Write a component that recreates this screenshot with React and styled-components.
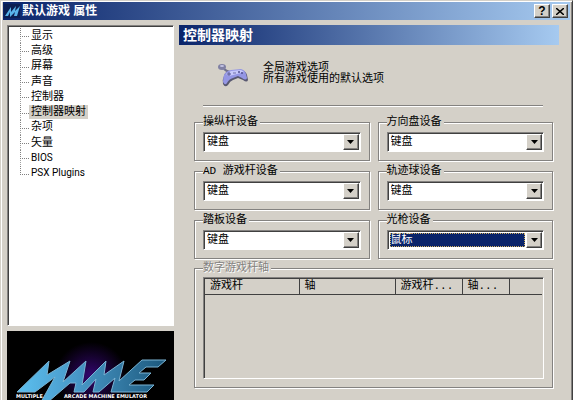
import React, { useState } from 'react'
import styled, { createGlobalStyle, css } from 'styled-components'

const face = '#d4d0c8'
const shadow = '#848280'
const dark = '#404040'
const navy = '#0a246a'
const sky = '#a6caf0'

const uiFont = '"Liberation Sans", "Noto Sans CJK SC", sans-serif'
const formFont = '"Liberation Mono", "Noto Sans CJK SC", monospace'
const treeFont = 'Roboto, "Noto Sans CJK SC", sans-serif'

const GlobalStyle = createGlobalStyle`
  * {
    box-sizing: border-box;
  }

  body {
    margin: 0;
    background: ${face};
    color: #000;
    font-family: ${uiFont};
    font-size: 11px;
    overflow: hidden;
  }
`

const sunken = css`
  border: 1px solid;
  border-color: ${shadow} #fff #fff ${shadow};
  box-shadow: inset 1px 1px ${dark};
`

const raised = css`
  border: 1px solid;
  border-color: #fff ${dark} ${dark} #fff;
  box-shadow: inset -1px -1px ${shadow};
`

const Window = styled.div`
  display: flex;
  flex-direction: column;
  height: 100vh;
  padding: 1px 1px 0 1px;
  background: ${face};
  border-top: 1px solid ${face};
  border-left: 1px solid ${face};
  border-right: 1px solid ${dark};
  box-shadow: inset 1px 1px #fff, inset -1px 0 ${shadow};
`

const TitleBar = styled.header`
  display: flex;
  align-items: center;
  gap: 2px;
  height: 18px;
  margin: 0 1px;
  padding: 0 2px 0 1px;
  background: linear-gradient(to right, ${navy}, ${sky});
`

const Title = styled.h1`
  flex: 1;
  margin: 0;
  color: #fff;
  font-size: 12px;
  font-weight: 700;
  line-height: 16px;
`

const CaptionButton = styled.button`
  display: grid;
  place-items: center;
  width: 16px;
  height: 14px;
  padding: 0;
  background: ${face};
  color: #000;
  font-family: ${uiFont};
  font-size: 12px;
  font-weight: 700;
  line-height: 12px;
  ${raised}
`

const Body = styled.div`
  display: flex;
  flex: 1;
  gap: 5px;
  min-height: 0;
  padding: 5px 12px 0 5px;
`

const Sidebar = styled.nav`
  display: flex;
  flex-direction: column;
  gap: 5px;
  width: 167px;
`

const TreeFrame = styled.div`
  flex: 1;
  padding: 2px 0 0 12px;
  background: #fff;
  font-family: ${treeFont};
  ${sunken}
`

const Tree = styled.ul`
  display: grid;
  grid-auto-rows: 1fr;
  height: 153px;
  margin: 0;
  padding: 0;
  list-style: none;
`

const TreeItem = styled.li`
  display: grid;
  grid-template-columns: 9px auto;
  justify-content: start;
  align-items: center;

  &:before {
    content: '';
    align-self: start;
    height: 8px;
    border-bottom: 1px dotted #808080;
    border-left: 1px dotted #808080;
  }

  &:not(:last-child) {
    background: linear-gradient(#a0a0a0 50%, transparent 50%) 0 0 / 1px 2px repeat-y;
  }
`

const TreeLink = styled.a`
  padding: 0 2px;
  color: #000;
  font-size: ${props => (props.$latin ? 10 : 11)}px;
  line-height: 14px;
  text-decoration: none;
  white-space: nowrap;
  background: ${props => (props.$active ? face : 'transparent')};
`

const Banner = styled.svg`
  display: block;
  width: 100%;
  height: 69px;
  background: #000;
`

const Main = styled.main`
  display: flex;
  flex: 1;
  flex-direction: column;
  min-width: 0;
  padding-bottom: 12px;
`

const SectionTitle = styled.h2`
  margin: 0;
  padding: 0 4px;
  color: #fff;
  font-size: 14px;
  font-weight: 700;
  line-height: 20px;
  background: linear-gradient(to right, ${navy}, ${sky});
`

const Intro = styled.div`
  display: flex;
  gap: 14px;
  margin: 0 16px 0 24px;
  padding: 17px 0 15px 14px;
  border-bottom: 1px solid ${shadow};
  box-shadow: 0 1px #fff;
`

const IntroText = styled.p`
  margin: 0;
  line-height: 11px;
`

const Form = styled.form`
  display: flex;
  flex: 1;
  flex-direction: column;
  gap: 3px;
  padding: 10px 6px 0 15px;
  font-family: ${formFont};
`

const DeviceGrid = styled.div`
  display: grid;
  grid-template-columns: 1fr 1fr;
  gap: 4px 8px;
`

const Group = styled.fieldset`
  min-width: 0;
  margin: 0;
  padding: 4px 8px 8px;
  border: 1px solid ${shadow};
  box-shadow: 1px 1px #fff, inset 1px 1px #fff;
`

const AxisGroup = styled(Group)`
  display: flex;
  flex: 1;
  flex-direction: column;
  padding-top: 3px;
`

const Legend = styled.legend`
  padding: 0 2px 0 0;
  color: ${props => (props.$disabled ? shadow : '#000')};
  text-shadow: ${props => (props.$disabled ? '1px 1px #fff' : 'none')};
  line-height: 12px;
  background: ${face};
`

const SelectBox = styled.div`
  display: grid;
  grid-template-columns: 1fr 16px;
  height: 20px;
  padding: 1px;
  background: #fff;
  ${sunken}
`

const Select = styled.select`
  grid-area: 1 / 1 / 2 / 3;
  appearance: none;
  min-width: 0;
  margin: 1px 17px 1px 1px;
  padding: 0 1px;
  border: 0;
  border-radius: 0;
  outline: ${props => (props.$active ? '1px dotted #d0b060' : 'none')};
  outline-offset: -1px;
  background: ${props => (props.$active ? navy : '#fff')};
  color: ${props => (props.$active ? '#fff' : '#000')};
  font-family: ${formFont};
  font-size: 11px;
  line-height: 14px;
`

const DropArrow = styled.span`
  display: grid;
  grid-area: 1 / 2 / 2 / 3;
  place-items: center;
  background: ${face};
  pointer-events: none;
  ${raised}
`

const TableFrame = styled.div`
  flex: 1;
  padding: 1px;
  ${sunken}
`

const AxisTable = styled.table`
  width: 100%;
  border-collapse: collapse;
  table-layout: fixed;
`

const HeadCell = styled.th`
  width: ${props => props.$width || 'auto'};
  height: 15px;
  padding: 0 5px;
  border-right: ${props => (props.$width ? `1px solid ${dark}` : '0')};
  border-bottom: 1px solid ${dark};
  font-weight: 400;
  line-height: 14px;
  text-align: left;
  white-space: nowrap;
`

const pages = ['显示', '高级', '屏幕', '声音', '控制器', '控制器映射', '杂项', '矢量', 'BIOS', 'PSX Plugins']

const devices = [
  { id: 'joystick', label: '操纵杆设备', value: '键盘' },
  { id: 'paddle', label: '方向盘设备', value: '键盘' },
  { id: 'adstick', label: 'AD 游戏杆设备', value: '键盘' },
  { id: 'trackball', label: '轨迹球设备', value: '键盘' },
  { id: 'pedal', label: '踏板设备', value: '键盘' },
  { id: 'lightgun', label: '光枪设备', value: '鼠标' },
]

const columns = [
  { label: '游戏杆', width: '94px' },
  { label: '轴', width: '96px' },
  { label: '游戏杆...', width: '67px' },
  { label: '轴...', width: '47px' },
  { label: '', width: null },
]

const AppIcon = () => (
  <svg width="16" height="14" viewBox="0 0 16 14" aria-hidden="true">
    <rect width="16" height="14" fill="#0b1f52" />
    <path d="M1 12 7 3 7 8 12 2 11 7 16 2 13 12 10 12 11 8 6 13 6 8 4 12z" fill="#58b4ea" />
  </svg>
)

const Gamepad = () => (
  <svg width="32" height="28" viewBox="0 0 32 28" aria-hidden="true">
    <path d="M7 7Q9 9 13 10" fill="none" stroke="#70708c" strokeWidth="2" />
    <ellipse cx="5" cy="5" rx="4" ry="3" fill="#8080a4" />
    <ellipse cx="5" cy="4" rx="2" ry="1" fill="#c4c4e4" />
    <path d="M7 14Q8 9 14 9L24 8Q29 9 30 13L31 18Q30 21 26 18L21 16 16 18Q13 19 11 23 8 26 6 22 5 18 7 14z" fill="#585870" />
    <path d="M7 13Q9 9 14 8L24 7Q28 8 29 12L30 16Q29 19 25 16L21 14 16 16Q12 17 10 21 8 24 6 20 6 16 7 13z" fill="#9496e4" />
    <path d="M9 12 14 9 24 8 27 10 20 12 12 14z" fill="#c6c8fa" />
    <path d="M10 12h4M12 10v4" stroke="#505090" />
    <path d="M16 11h3" stroke="#7070a8" />
    <circle cx="22" cy="10" r="1" fill="#505090" />
    <circle cx="25" cy="11" r="1" fill="#505090" />
  </svg>
)

const MameBanner = () => (
  <Banner viewBox="0 0 165 69" role="img" aria-label="MAME">
    <defs>
      <linearGradient id="steel" x1="0" x2="1">
        <stop offset="0" stopColor="#5cc0f0" />
        <stop offset="0.4" stopColor="#4898c8" />
        <stop offset="1" stopColor="#1c587c" />
      </linearGradient>
      <radialGradient id="glow">
        <stop offset="0" stopColor="#340670" />
        <stop offset="1" stopColor="#000" />
      </radialGradient>
    </defs>
    <ellipse cx="83" cy="45" rx="36" ry="34" fill="url(#glow)" />
    <path
      d="M9 61 41 30 39 44 62 30 55 51 78 30 74 54 98 30 96 44 116 30 111 50 134 29H158L150 36H138L131 42H143L136 49H127L121 54H146L139 61H103L107 47 91 61H85L88 48 76 61H66L68 52H62L40 71H33L47 46 27 61z"
      fill="url(#steel)"
      stroke="#7ab4d4"
      strokeWidth="1"
    />
    <g fill="#fff" fontFamily="DejaVu Sans" fontSize="5" fontWeight="700">
      <text x="8" y="67">MULTIPLE</text>
      <text x="56" y="67">ARCADE MACHINE EMULATOR</text>
    </g>
  </Banner>
)

const DeviceSelect = ({ id, label, value }) => {
  const [current, setCurrent] = useState(value)

  return (
    <Group>
      <Legend><label htmlFor={id}>{label}</label></Legend>
      <SelectBox>
        <Select id={id} $active={id === 'lightgun'} value={current} onChange={e => setCurrent(e.target.value)}>
          <option>键盘</option>
          <option>鼠标</option>
        </Select>
        <DropArrow>
          <svg width="7" height="4" viewBox="0 0 7 4" aria-hidden="true"><path d="M0 0h7L3.5 4z" /></svg>
        </DropArrow>
      </SelectBox>
    </Group>
  )
}

const App = () => (
  <>
    <GlobalStyle />
    <Window>
      <TitleBar>
        <AppIcon />
        <Title>默认游戏 属性</Title>
        <CaptionButton type="button" aria-label="帮助">?</CaptionButton>
        <CaptionButton type="button" aria-label="关闭">
          <svg width="8" height="7" viewBox="0 0 8 7"><path d="M0 0 8 7M8 0 0 7" stroke="#000" strokeWidth="1.5" /></svg>
        </CaptionButton>
      </TitleBar>
      <Body>
        <Sidebar>
          <TreeFrame>
            <Tree>
              {pages.map(page => (
                <TreeItem key={page}>
                  <TreeLink href="#" $active={page === '控制器映射'} $latin={/^[A-Z]/.test(page)}>{page}</TreeLink>
                </TreeItem>
              ))}
            </Tree>
          </TreeFrame>
          <MameBanner />
        </Sidebar>
        <Main>
          <SectionTitle>控制器映射</SectionTitle>
          <Intro>
            <Gamepad />
            <IntroText>
              全局游戏选项
              <br />
              所有游戏使用的默认选项
            </IntroText>
          </Intro>
          <Form>
            <DeviceGrid>
              {devices.map(device => (
                <DeviceSelect key={device.id} {...device} />
              ))}
            </DeviceGrid>
            <AxisGroup disabled>
              <Legend $disabled>数字游戏杆轴</Legend>
              <TableFrame>
                <AxisTable>
                  <thead>
                    <tr>
                      {columns.map((column, key) => (
                        <HeadCell key={key} $width={column.width}>{column.label}</HeadCell>
                      ))}
                    </tr>
                  </thead>
                </AxisTable>
              </TableFrame>
            </AxisGroup>
          </Form>
        </Main>
      </Body>
    </Window>
  </>
)

export default App
